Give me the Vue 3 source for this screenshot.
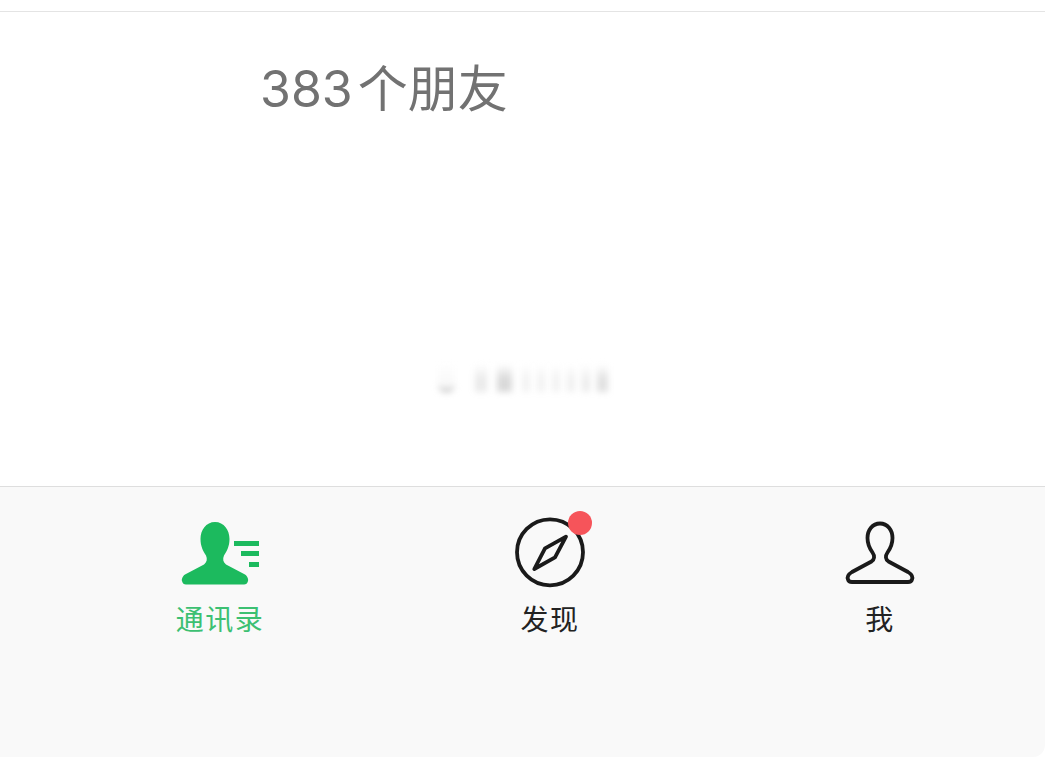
<script setup>
const blurs = [
  { id: 1, w: 12, o: 0.18, gap: 10 },
  { id: 2, w: 15, o: 0.32, gap: 10 },
  { id: 3, w: 8, o: 0.11, gap: 7 },
  { id: 4, w: 8, o: 0.11, gap: 7 },
  { id: 5, w: 8, o: 0.11, gap: 7 },
  { id: 6, w: 8, o: 0.13, gap: 7 },
  { id: 7, w: 8, o: 0.16, gap: 7 },
  { id: 8, w: 11, o: 0.26, gap: 0 }
]
</script>

<template>
  <div class="page">
    <div class="top"></div>
    <main class="main">
      <h1 class="count">383<span class="cjk">个朋友</span></h1>
      <div class="smudge" aria-hidden="true">
        <span class="cup"></span>
        <span
          v-for="b in blurs"
          :key="b.id"
          class="bar"
          :style="{ width: b.w + 'px', opacity: b.o, marginRight: b.gap + 'px' }"
        ></span>
      </div>
    </main>
    <nav class="tabbar">
      <div class="tab active">
        <div class="icon">
          <svg width="80" height="64" viewBox="0 0 80 64">
            <path
              fill="#1cba5e"
              d="M35 1C44 1 49.500 9 49.500 18C49.500 25 47 30 44 34.500C42.500 38 43 41 46 43.500L65 53.500C68 55.500 68.500 59 68 60C67.500 62.500 66 63.500 64 63.500H6C4 63.500 2.500 62.500 2 60C1.500 59 2 55.500 5 53.500L24 43.500C27 41 27.500 38 26 34.500C23 30 20.500 25 20.500 18C20.500 9 26 1 35 1Z"
            />
            <rect x="54" y="20" width="25" height="5" fill="#1cba5e" />
            <rect x="61" y="30" width="18" height="5" fill="#1cba5e" />
            <rect x="69" y="41" width="10" height="5" fill="#1cba5e" />
          </svg>
        </div>
        <span class="label">通讯录</span>
      </div>
      <div class="tab">
        <div class="icon">
          <svg class="open" width="80" height="64" viewBox="0 0 80 64">
            <circle cx="40" cy="31.300" r="33" fill="none" stroke="#1a1a1a" stroke-width="3.800" />
            <path
              d="M56 15.700L35 27.300L24.300 48L45 36.300Z"
              fill="none"
              stroke="#1a1a1a"
              stroke-width="3.800"
              stroke-linejoin="round"
            />
          </svg>
          <span class="badge"></span>
        </div>
        <span class="label">发现</span>
      </div>
      <div class="tab">
        <div class="icon">
          <svg width="80" height="64" viewBox="0 0 80 64">
            <path
              fill="none"
              stroke="#1a1a1a"
              stroke-width="3.800"
              stroke-linejoin="round"
              d="M40 2.500C47.500 2.500 52.500 9 52.500 17C52.500 23 50 28 47.500 31.500C45 35 45.500 38.500 48.500 40.500L68 51C72 53.500 73 56 72 58.500C71.500 60.500 70 61 68 61H12C10 61 8.500 60.500 8 58.500C7 56 8 53.500 12 51L31.500 40.500C34.500 38.500 35 35 32.500 31.500C30 28 27.500 23 27.500 17C27.500 9 32.500 2.500 40 2.500Z"
            />
          </svg>
        </div>
        <span class="label">我</span>
      </div>
    </nav>
  </div>
</template>

<style>
html,
body {
  margin: 0;
  background: #fff;
}
</style>

<style scoped>
.page {
  width: 1045px;
  height: 757px;
  display: flex;
  flex-direction: column;
  overflow: hidden;
  background: #fff;
  font-family: "Inter", "Noto Sans CJK SC", sans-serif;
}
.top {
  height: 11px;
  flex: none;
  border-bottom: 1px solid #e4e4e4;
}
.main {
  flex: 1;
  padding: 47px 0 0 260px;
  box-sizing: border-box;
}
.count {
  margin: 0;
  font-size: 50px;
  line-height: 60px;
  font-weight: 400;
  color: #727272;
  font-family: "Inter", "Noto Sans CJK SC", sans-serif;
}
.cjk {
  margin-left: 5px;
}
.smudge {
  display: flex;
  align-items: stretch;
  height: 29px;
  margin: 244px 0 0 178px;
  filter: blur(3px);
}
.cup {
  width: 17px;
  margin-right: 20px;
  border-bottom: 3px solid #bbb;
  border-radius: 0 0 8px 8px;
  box-sizing: border-box;
  background: linear-gradient(to bottom, #fff, #f7f7f7);
}
.bar {
  background: linear-gradient(to bottom, #fff 5%, #8a8a8a 55%, #8a8a8a);
}
.tabbar {
  flex: none;
  height: 271px;
  box-sizing: border-box;
  padding: 34px 0 0 55px;
  display: grid;
  grid-template-columns: repeat(3, 1fr);
  align-items: start;
  background: #f9f9f9;
  border-top: 1px solid #dedede;
  border-bottom-right-radius: 12px;
}
.tab {
  display: flex;
  flex-direction: column;
  align-items: center;
  color: #222;
}
.icon {
  position: relative;
  width: 80px;
  height: 64px;
}
.icon svg {
  display: block;
}
.icon .open {
  overflow: visible;
}
.badge {
  position: absolute;
  left: 58px;
  top: -10px;
  width: 24px;
  height: 24px;
  border-radius: 50%;
  background: #f6545a;
}
.label {
  margin-top: 18px;
  font-size: 28px;
  line-height: 34px;
  letter-spacing: 1.5px;
}
.active .label {
  color: #3cc072;
}
</style>
